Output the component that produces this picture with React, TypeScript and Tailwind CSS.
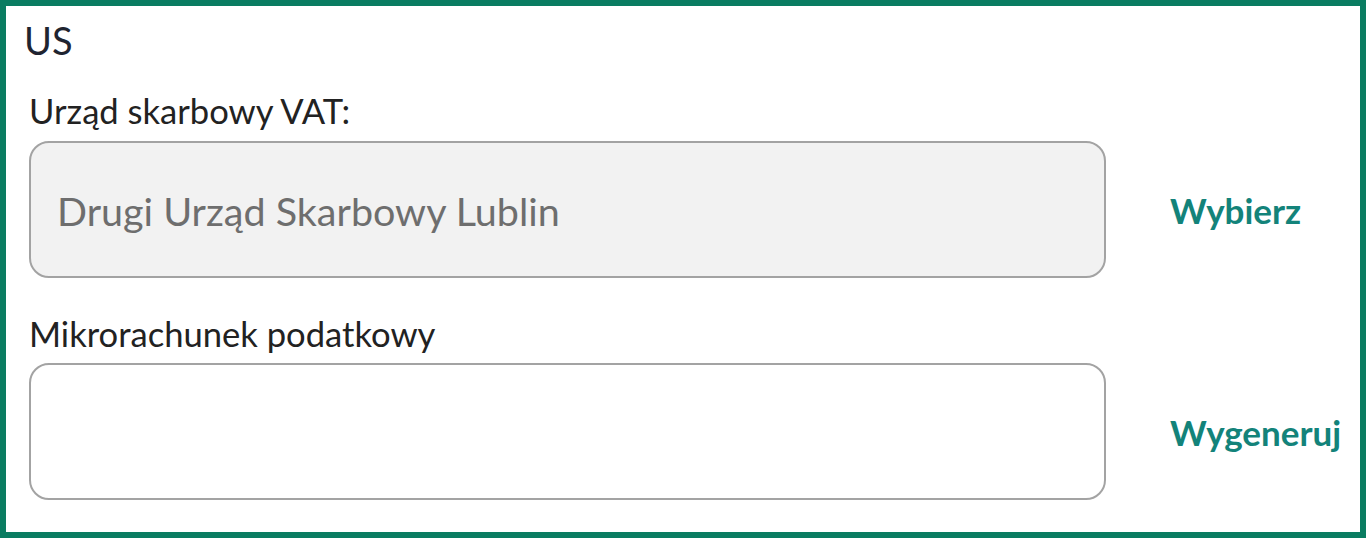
export default function App() {
  return (
    <div className="w-[1366px] h-[538px] border-[6px] border-[#0a7c61] bg-white pl-[23px] pt-[11px] font-['Lato','Open_Sans',sans-serif]">
      <h2 className="-ml-[5px] text-[38px] leading-[46px] text-[#1f2430]">US</h2>

      <div className="mt-[28px] flex items-end">
        <div className="w-[1077px]">
          <label className="block text-[34.6px] leading-[40px] text-[#222]">Urząd skarbowy VAT:</label>
          <div className="mt-[10px] h-[137px] rounded-[20px] border-2 border-[#a3a3a3] bg-[#f2f2f2] flex items-center px-[26px]">
            <span className="pt-[3px] text-[39.5px] text-[#6e6e6e]">Drugi Urząd Skarbowy Lublin</span>
          </div>
        </div>
        <div className="h-[137px] flex items-center pl-[64px]">
          <button className="pt-[2px] text-[35px] font-bold text-[#13837a]">Wybierz</button>
        </div>
      </div>

      <div className="mt-[36px] flex items-end">
        <div className="w-[1077px]">
          <label className="block text-[34.6px] leading-[40px] text-[#222]">Mikrorachunek podatkowy</label>
          <div className="mt-[9px] h-[137px] rounded-[20px] border-2 border-[#a3a3a3] bg-white" />
        </div>
        <div className="h-[137px] flex items-center pl-[64px]">
          <button className="pt-[2px] text-[35px] font-bold text-[#13837a]">Wygeneruj</button>
        </div>
      </div>
    </div>
  );
}
